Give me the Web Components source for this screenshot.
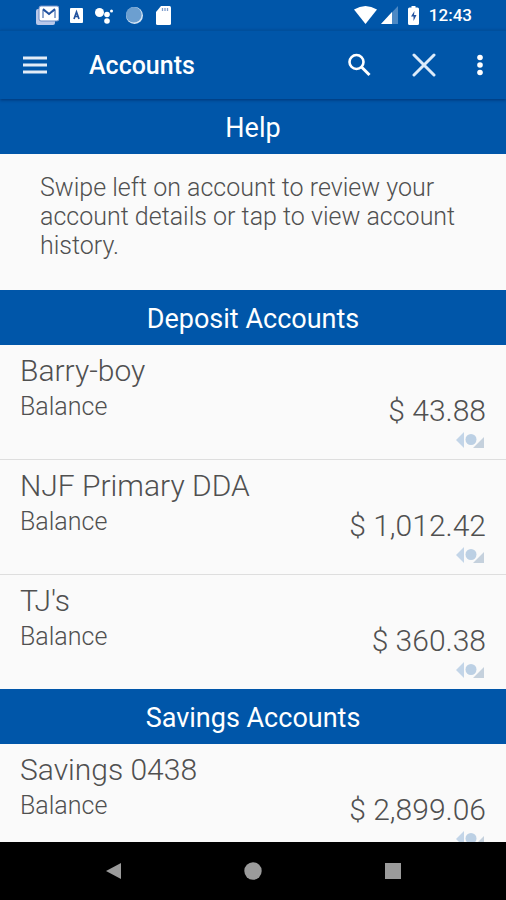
<!doctype html>
<html lang="en">
<head>
    <meta charset="utf-8">
    <meta name="viewport" content="width=device-width, initial-scale=1">
    <title>Accounts</title>

    <style>
        :root {
            --brand: #0056a9;
            --paper: #fafafa;
            --ink: #505050;
        }
        body {
            margin: 0;
            font-family: Roboto, "Liberation Sans", sans-serif;
            color: var(--ink);
            background: var(--paper);
        }
    </style>
</head>
<body>
    <accounts-app>
        <account-section heading="Help">
            <help-text>Swipe left on account to review your account details or tap to view account history.</help-text>
        </account-section>
        <account-section heading="Deposit Accounts">
            <account-row name="Barry-boy" amount="$ 43.88"></account-row>
            <account-row name="NJF Primary DDA" amount="$ 1,012.42"></account-row>
            <account-row name="TJ's" amount="$ 360.38"></account-row>
        </account-section>
        <account-section heading="Savings Accounts">
            <account-row name="Savings 0438" amount="$ 2,899.06"></account-row>
        </account-section>
    </accounts-app>

    <template id="accounts-app">
        <style>
            :host {
                display: flex;
                flex-direction: column;
                height: 100vh;
            }
            main {
                flex: 1;
                min-height: 0;
                overflow-y: auto;
                scrollbar-width: none;
            }
        </style>
        <status-bar></status-bar>
        <app-bar heading="Accounts"></app-bar>
        <main><slot></slot></main>
        <nav-bar></nav-bar>
    </template>

    <template id="status-bar">
        <style>
            :host {
                display: flex;
                justify-content: space-between;
                align-items: center;
                height: 30px;
                padding: 0 34px 0 36px;
                box-sizing: border-box;
                background: var(--brand);
                color: #fff;
                font-size: 17px;
                font-weight: 500;
            }
            div {
                display: flex;
                align-items: center;
            }
            .notices { gap: 10px; }
            .system { gap: 4px; }
            .battery { margin: 0 6px; }
            svg { display: block; }
        </style>
        <div class="notices">
            <svg width="23" height="20" viewBox="0 0 23 20" aria-hidden="true">
                <rect x="0" y="4" width="19" height="16" rx="2" fill="#b9c8ea"/>
                <rect x="3" y="1" width="20" height="15" rx="2" fill="#fff" stroke="#6d8cc6" stroke-width="1"/>
                <path d="M7 13V5l6 4 6-4v8" fill="none" stroke="#24539f" stroke-width="1"/>
                <path d="M7 4l6 5 6-5" fill="none" stroke="#24539f" stroke-width="2"/>
            </svg>
            <svg width="15" height="17" viewBox="0 0 15 17" aria-hidden="true">
                <rect x="1" y="1" width="13" height="15" rx="1" fill="#fff"/>
                <path d="M5 12l2.500-7 2.500 7M6 9.500h3" fill="none" stroke="#24539f" stroke-width="1.700"/>
            </svg>
            <svg width="20" height="19" viewBox="0 0 20 19" aria-hidden="true" fill="#fff">
                <circle cx="5.500" cy="6.500" r="4.500"/>
                <circle cx="13" cy="8.500" r="2.800"/>
                <circle cx="13" cy="15" r="2.800"/>
                <circle cx="17.500" cy="5" r="1.500"/>
            </svg>
            <svg width="19" height="19" viewBox="0 0 19 19" aria-hidden="true">
                <circle cx="10.500" cy="9.500" r="8.500" fill="#d7e6f5"/>
                <circle cx="9.800" cy="8.800" r="7.800" fill="#6c9fd0"/>
            </svg>
            <svg width="20" height="19" viewBox="0 0 20 19" aria-hidden="true">
                <path d="M8 0h8.500Q18 0 18 1.500v16q0 1.500-1.500 1.500h-12Q3 19 3 17.500V6z" fill="#fff"/>
                <path d="M9.500 2v3M12 2v3M14.500 2v3" stroke="#7d9ccb" stroke-width="1.300"/>
            </svg>
        </div>
        <div class="system">
            <svg width="23" height="18" viewBox="0 0 23 18" aria-hidden="true">
                <path d="M0 3.500Q11.500-3.500 23 3.500L11.500 18z" fill="#fff"/>
            </svg>
            <svg width="17" height="18" viewBox="0 0 17 18" aria-hidden="true">
                <path d="M17 0v18H0z" fill="#4d89c5"/>
                <path d="M11 6v12H0z" fill="#fff"/>
            </svg>
            <svg class="battery" width="11" height="19" viewBox="0 0 11 19" aria-hidden="true">
                <path d="M3.500 0h4v1.500h2Q11 1.500 11 3v14.500q0 1.500-1.500 1.500h-8Q0 19 0 17.500V3q0-1.500 1.500-1.500h2z" fill="#fff"/>
                <path d="M6.500 5L3 10.500H5.500V15L8.500 9H6z" fill="#24539f"/>
            </svg>
            <time>12:43</time>
        </div>
    </template>

    <template id="app-bar">
        <style>
            :host {
                position: relative;
                z-index: 1;
                display: flex;
                align-items: center;
                height: 69px;
                padding: 0 8px 0 17px;
                box-sizing: border-box;
                background: var(--brand);
                color: #fff;
                border-top: 1px solid #004f9c;
                box-shadow: 0 1px 3px rgba(0, 30, 80, .6);
            }
            h1 {
                flex: 1;
                margin: 0 0 0 36px;
                font-size: 25px;
                font-weight: 500;
            }
            button {
                display: grid;
                place-items: center;
                width: 36px;
                height: 48px;
                padding: 0;
                border: 0;
                background: none;
                color: inherit;
                cursor: pointer;
            }
            .actions {
                display: flex;
                gap: 20px;
            }
            .actions button:first-child { margin-right: 9px; }
            svg { display: block; }
        </style>
        <button aria-label="Open menu">
            <svg width="24" height="18" viewBox="0 0 24 18"><path d="M0 2h24M0 9h24M0 16h24" stroke="#e2ecf7" stroke-width="3"/></svg>
        </button>
        <h1></h1>
        <div class="actions">
            <button aria-label="Search">
                <svg width="24" height="24" viewBox="0 0 24 24" fill="none" stroke="#fff"><circle cx="9.500" cy="9" r="7" stroke-width="2.600"/><path d="M14.500 14l8 8" stroke-width="3"/></svg>
            </button>
            <button aria-label="Close">
                <svg width="24" height="24" viewBox="0 0 24 24"><path d="M2 2l20 20M22 2L2 22" stroke="#dcebfa" stroke-width="3" stroke-linecap="round"/></svg>
            </button>
            <button aria-label="More options">
                <svg width="8" height="22" viewBox="0 0 8 22" fill="#fff"><circle cx="4" cy="3.500" r="2.800"/><circle cx="4" cy="11" r="2.800"/><circle cx="4" cy="18.500" r="2.800"/></svg>
            </button>
        </div>
    </template>

    <template id="account-section">
        <style>
            :host { display: block; }
            h2 {
                margin: 0;
                padding: 3px 0 0;
                background: var(--brand);
                color: #fff;
                font-size: 27px;
                font-weight: 400;
                line-height: 52px;
                text-align: center;
            }
        </style>
        <h2></h2>
        <slot></slot>
    </template>

    <template id="help-text">
        <style>
            :host {
                display: block;
                padding: 19px 40px 30px;
                font-size: 25px;
                font-weight: 300;
                line-height: 29px;
            }
        </style>
        <slot></slot>
    </template>

    <template id="account-row">
        <style>
            :host {
                display: block;
                border-bottom: 1px solid #dedede;
            }
            :host(:last-child) { border-bottom: 0; }
            a {
                display: grid;
                grid-template-columns: 1fr auto;
                padding: 8px 20px 11px;
                color: inherit;
                font-weight: 300;
                text-decoration: none;
            }
            .name {
                grid-column: 1 / -1;
                font-size: 30px;
                line-height: 36px;
            }
            .label {
                font-size: 25px;
                line-height: 36px;
            }
            .amount {
                font-size: 30px;
                line-height: 43px;
            }
            svg {
                grid-column: 2;
                justify-self: end;
                display: block;
            }
        </style>
        <a href="#">
            <span class="name"></span>
            <span class="label">Balance</span>
            <span class="amount"></span>
            <svg width="30" height="16" viewBox="0 0 30 16" aria-hidden="true">
                <path d="M8 0v16L0 8z" fill="#c3d5e8"/>
                <circle cx="15" cy="7.500" r="5.500" fill="#bcd0e4"/>
                <path d="M28 5v11H17z" fill="#c5d1dd"/>
            </svg>
        </a>
    </template>

    <template id="nav-bar">
        <style>
            :host {
                display: flex;
                justify-content: center;
                gap: 92px;
                padding: 5px 0;
                background: #000;
            }
            button {
                display: grid;
                place-items: center;
                width: 48px;
                height: 48px;
                padding: 0;
                border: 0;
                background: none;
                cursor: pointer;
            }
            svg { fill: #9b9b9b; }
        </style>
        <button aria-label="Back"><svg width="18" height="18" viewBox="0 0 18 18"><path d="M17 1v16L2 9z"/></svg></button>
        <button aria-label="Home"><svg width="18" height="18" viewBox="0 0 18 18"><circle cx="9" cy="9" r="8.700"/></svg></button>
        <button aria-label="Recent apps"><svg width="18" height="18" viewBox="0 0 18 18"><path d="M1 1h16v16H1z"/></svg></button>
    </template>
</body>
<script>
    (function(window, document) {

        class TemplateElement extends HTMLElement {
            constructor() {
                super();
                var template = document.getElementById(this.localName);
                this.attachShadow({mode: 'open'}).appendChild(template.content.cloneNode(true));
            }

            setText(selector, attribute) {
                this.shadowRoot.querySelector(selector).textContent = this.getAttribute(attribute);
            }
        }

        class AppBar extends TemplateElement {
            connectedCallback() {
                this.setText('h1', 'heading');
            }
        }

        class AccountSection extends TemplateElement {
            connectedCallback() {
                this.setText('h2', 'heading');
            }
        }

        class AccountRow extends TemplateElement {
            connectedCallback() {
                this.setText('.name', 'name');
                this.setText('.amount', 'amount');
            }
        }

        window.customElements.define('status-bar', class extends TemplateElement {});
        window.customElements.define('app-bar', AppBar);
        window.customElements.define('nav-bar', class extends TemplateElement {});
        window.customElements.define('help-text', class extends TemplateElement {});
        window.customElements.define('account-row', AccountRow);
        window.customElements.define('account-section', AccountSection);
        window.customElements.define('accounts-app', class extends TemplateElement {});
    })(window, document);
</script>
</html>
